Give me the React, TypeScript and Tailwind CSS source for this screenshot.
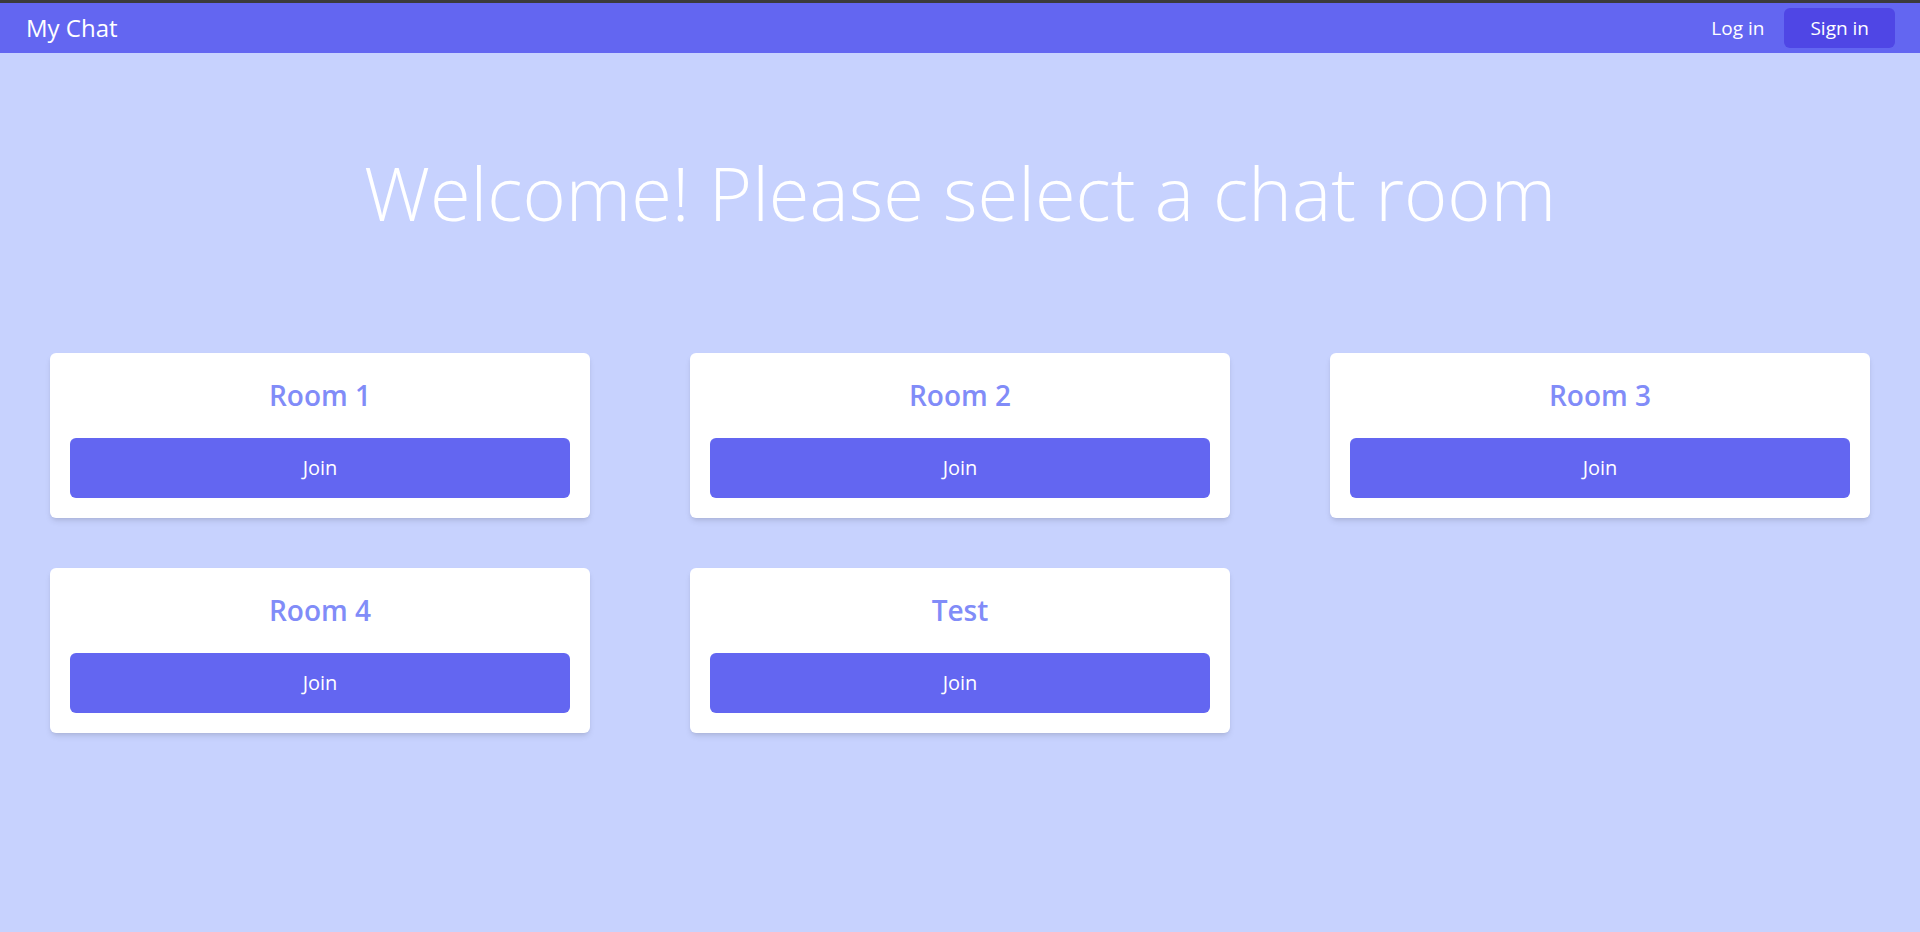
const rooms = ["Room 1", "Room 2", "Room 3", "Room 4", "Test"];

const App = () => {
  return (
    <div className="min-h-screen bg-[#c7d2fe] font-['Open_Sans',sans-serif]">
      {/* window frame line */}
      <div className="h-[3px] bg-[#3b3b3b]" />

      {/* Navbar */}
      <nav className="flex items-center justify-between h-[50px] bg-[#6366f1] pl-[26px] pr-[25px]">
        <span className="text-2xl text-white">My Chat</span>
        <div className="flex items-center">
          <button className="text-[19px] text-white mr-5">Log in</button>
          <button className="text-[19px] leading-7 text-white bg-[#4f46e5] rounded-md px-[26px] py-1.5">Sign in</button>
        </div>
      </nav>

      {/* Welcome */}
      <h1 className="pt-[103px] mb-[123px] text-center text-[74px] leading-none font-[350] text-white">
        Welcome! Please select a chat room
      </h1>

      {/* Rooms */}
      <div className="grid grid-cols-3 gap-x-[100px] gap-y-[50px] px-[50px]">
        {rooms.map(room => (
          <div key={room} className="bg-white rounded-md shadow-md p-5">
            <h2 className="pt-1 mb-[25px] text-center text-[28px] leading-9 font-semibold text-[#818cf8]">{room}</h2>
            <button className="w-full bg-[#6366f1] text-white text-xl rounded-md py-4">Join</button>
          </div>
        ))}
      </div>
    </div>
  );
};

export default App;
